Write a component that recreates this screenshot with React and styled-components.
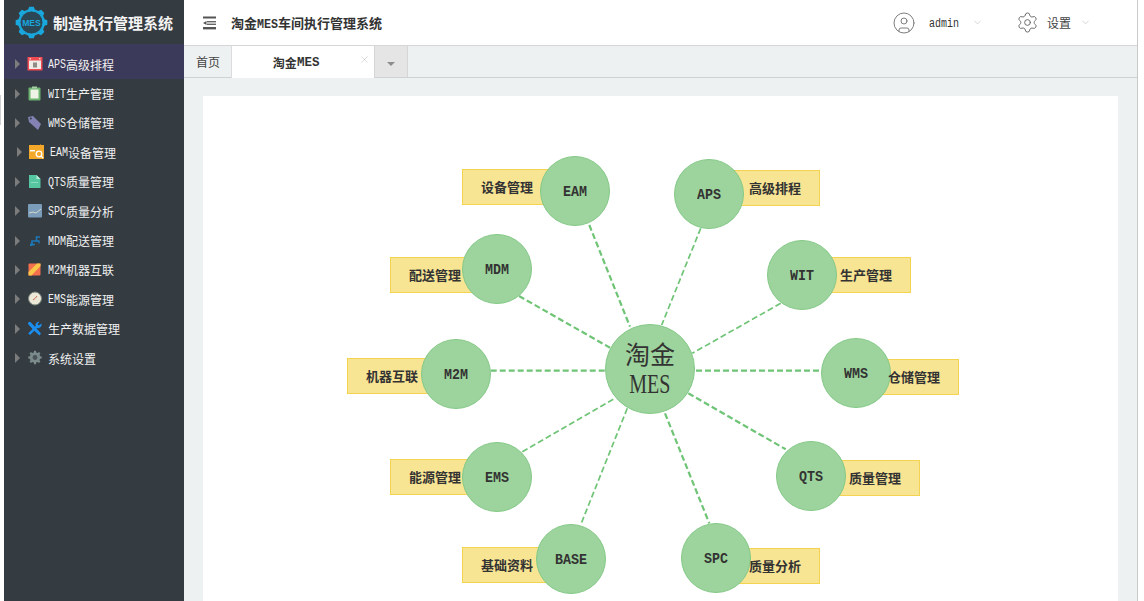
import React from "react";
import styled, { createGlobalStyle } from "styled-components";
import { ChevronDown, CircleUser, Settings, X } from "lucide-react";

const CJK = `"Noto Sans CJK SC", "Noto Sans", sans-serif`;
const MONO = `"Liberation Mono", "Noto Sans CJK SC", monospace`;

const Global = createGlobalStyle`
  html, body { margin: 0; padding: 0; background: #fff; }
  * { box-sizing: border-box; }
  body { font-family: ${CJK}; font-size: 12px; color: #333; }
`;

const Page = styled.div`
  display: flex; width: 1144px; height: 601px; overflow: hidden; background: #fff;
`;
const Gutter = styled.div`
  width: 4px; flex: none; padding-top: 95px;
  &::before { content: ""; display: block; width: 1px; height: 30px; background: #d0d0d0; }
`;
const Sidebar = styled.aside`
  width: 180px; flex: none; background: #343b41; color: #fff;
`;
const Brand = styled.div`
  height: 44px; display: flex; align-items: center; padding-left: 10px; gap: 4px;
  font-size: 15px; font-weight: 700; color: #f4f4f4; background: #343b41;
`;
const Menu = styled.nav`display: flex; flex-direction: column;`;
/* SimSun's Latin is half the width of its Chinese: a mono face narrowed to the same advance */
const Latin = styled.span`
  display: inline-block; font-family: ${MONO};
  font-size: ${p => p.$size}px; font-weight: ${p => (p.$bold ? 700 : 400)};
  line-height: 1; transform-origin: left center;
  transform: scaleX(${p => p.$adv / (p.$size * 0.6)});
  margin-right: ${p => -(p.$size * 0.6 - p.$adv) * p.$n}px;
  margin-top: ${p => p.$drop || 0}px;
`;
const Row = styled.div`
  display: flex; align-items: center; height: ${p => (p.$active ? "35.4px" : "29.4px")};
  padding-top: ${p => (p.$active ? "6px" : "0")};
  padding-bottom: 1px;
  padding-left: ${p => (p.$shift ? "13px" : "11px")};
  background: ${p => (p.$active ? "#3c3a5b" : "transparent")};
  color: #f0f0f0; font-size: 12px; white-space: nowrap;
`;
const Arrow = styled.span`
  width: 0; height: 0; flex: none; margin-right: 7px;
  border-left: 5px solid #7c7c7c; border-top: 5px solid transparent; border-bottom: 5px solid transparent;
`;
const IconBox = styled.span`
  width: 16px; height: 16px; flex: none; margin-right: 5px; display: flex;
  svg { display: block; }
`;

const Main = styled.main`
  width: 954px; flex: none; display: flex; flex-direction: column;
  border-right: 1px solid #c9c9c9; height: 601px;
`;
const Header = styled.header`
  height: 46px; flex: none; display: flex; align-items: center; background: #fff;
  border-bottom: 1px solid #d6d6d6; padding-left: 19px;
`;
const HeadTitle = styled.div`
  margin-left: 14px; font-size: 13px; font-weight: 700; color: #333; width: 661px; white-space: nowrap;
`;
const UserArea = styled.div`display: flex; align-items: center; color: #444;`;
const UserName = styled.span`
  display: flex; margin-left: 13px; color: #333;
`;
const Caret = styled.span`
  display: flex; color: #b4b4b4; margin-left: ${p => p.$gap}px; margin-right: ${p => p.$after || 0}px;
`;
const SetText = styled.span`font-size: 12px; margin-left: 8px; color: #444;`;

const Tabs = styled.div`
  height: 32px; flex: none; display: flex; background: #eef1f2; border-bottom: 1px solid #cfd2d4;
`;
const HomeTab = styled.div`
  width: 47px; display: flex; align-items: center; padding-left: 12px; color: #444; font-size: 12px;
`;
const ActiveTab = styled.div`
  width: 144px; margin-bottom: -1px; background: #fff; position: relative;
  border-left: 1px solid #dcdcdc; border-right: 1px solid #d6d6d6;
  display: flex; align-items: center; justify-content: center; padding-right: 14px;
  font-weight: 700; font-size: 12px; color: #333;
`;
const TabClose = styled.span`
  position: absolute; right: 4px; top: 8px; display: flex; color: #b5b5b5;
`;
const DropTab = styled.div`
  width: 33px; background: #e5e5e5; border-right: 1px solid #d6d6d6;
  display: flex; align-items: center; justify-content: center; padding-top: 4px;
  &::before { content: ""; border-top: 4px solid #8d8d8d; border-left: 4px solid transparent; border-right: 4px solid transparent; }
`;
const Content = styled.div`
  flex: 1; background: #eef1f2; padding: 18px 19px 0; min-height: 0;
`;
const Card = styled.section`
  background: #fff; height: 600px; position: relative; overflow: hidden;
`;
const Lines = styled.svg`position: absolute; left: 0; top: 0;`;
const Node = styled.div`
  position: absolute; z-index: 1; width: 70px; height: 70px; border-radius: 50%;
  background: #9dd39c; border: 1px solid #84c987;
  display: flex; align-items: center; justify-content: center; color: #333;
`;
const Label = styled.div`
  position: absolute; width: 98px; height: 36px; background: #f8e594; border: 1px solid #f3d34f;
  display: flex; align-items: center; justify-content: ${p => (p.$right ? "flex-end" : "flex-start")};
  padding: 0 18px;
`;
const LabelText = styled.span`
  position: relative; z-index: 2; font-size: 13px; font-weight: 700; color: #333;
  white-space: nowrap; margin-top: -2px;
`;
const Hub = styled.div`
  position: absolute; z-index: 1; left: 402px; top: 228px; width: 90px; height: 90px; border-radius: 50%;
  background: #9dd39c; border: 1px solid #84c987; color: #333;
  display: flex; flex-direction: column; align-items: center; justify-content: center;
`;
const HubTop = styled.span`font-size: 25px; line-height: 32px; margin-top: -3px;`;
const HubBottom = styled.span`
  font-family: "Liberation Serif", serif; font-size: 27px; line-height: 30px;
  transform: scaleX(0.74);
`;

function gear(cx, cy, n, ro, ri) {
  let d = "";
  for (let i = 0; i < n; i++) {
    const a = (i / n) * Math.PI * 2 - Math.PI / 2;
    const s = (Math.PI * 2) / n;
    const pts = [
      [ri, a - s * 0.32], [ro, a - s * 0.18], [ro, a + s * 0.18], [ri, a + s * 0.32],
    ];
    pts.forEach(([r, t], k) => {
      d += `${i === 0 && k === 0 ? "M" : "L"}${(cx + r * Math.cos(t)).toFixed(2)} ${(cy + r * Math.sin(t)).toFixed(2)}`;
    });
  }
  return d + "Z";
}

const Logo = () => (
  <svg width="35" height="35" viewBox="0 0 35 35">
    <path d={gear(17.5, 17.5, 8, 16, 13.5)} fill="#19a8de" />
    <circle cx="17.5" cy="17.5" r="11.5" fill="#2b4655" stroke="#19a8de" strokeWidth="1" />
    <text x="17.5" y="20.5" textAnchor="middle" fontFamily="Liberation Sans" fontWeight="700" fontSize="8.5" fill="#19a8de">MES</text>
  </svg>
);

const icons = {
  aps: (
    <svg width="16" height="16" viewBox="0 0 16 16">
      <rect x="0.5" y="1" width="15" height="13.5" fill="#ef4b50" />
      <rect x="2" y="4.5" width="12" height="8.5" fill="#efeae6" />
      <rect x="6" y="6.5" width="4" height="5" fill="#8f8a84" />
      <rect x="2.5" y="2" width="1.5" height="1.5" fill="#f6c9c9" />
      <rect x="12" y="2" width="1.5" height="1.5" fill="#f6c9c9" />
    </svg>
  ),
  wit: (
    <svg width="16" height="16" viewBox="0 0 16 16">
      <rect x="1.5" y="1.5" width="12" height="13" rx="1" fill="#6cb36f" />
      <rect x="3.5" y="3.5" width="8" height="9" fill="#eef3e6" />
      <rect x="5" y="0.5" width="5" height="2" fill="#a7cfa6" />
    </svg>
  ),
  wms: (
    <svg width="16" height="16" viewBox="0 0 16 16">
      <path d="M1 2 L6 1 L14 9 L11 15 L2 7Z" fill="#8482b4" />
      <circle cx="3.8" cy="3.6" r="1" fill="#343b41" />
    </svg>
  ),
  eam: (
    <svg width="16" height="16" viewBox="0 0 16 16">
      <path d="M0 1H11L12 0V1H15V15H0Z" fill="#f4a829" />
      <rect x="1" y="6" width="5" height="1.4" fill="#fff" />
      <circle cx="10" cy="10" r="2.8" fill="#f4a829" stroke="#fff" strokeWidth="1.3" />
      <path d="M12 12l2 2" stroke="#fff" strokeWidth="1.3" />
    </svg>
  ),
  qts: (
    <svg width="16" height="16" viewBox="0 0 16 16">
      <path d="M2 1H9.5L13.5 5V14H2Z" fill="#55c6a0" />
      <path d="M9.5 1L13.5 5H9.5Z" fill="#b6ecd7" />
      <rect x="4" y="8" width="7" height="1" fill="#8cdcbf" />
    </svg>
  ),
  spc: (
    <svg width="16" height="16" viewBox="0 0 16 16">
      <rect x="1" y="1" width="14" height="13.5" rx="1" fill="#7c9db9" />
      <path d="M2 10L6 9L9 10L14 6" fill="none" stroke="#d6d8c8" strokeWidth="1" />
    </svg>
  ),
  mdm: (
    <svg width="16" height="16" viewBox="0 0 16 16">
      <path d="M13 4H9.5V8H5V11.5H8" fill="none" stroke="#1d78b8" strokeWidth="1.6" />
      <path d="M9.5 8h2.5v2.5" fill="none" stroke="#1d78b8" strokeWidth="1.3" />
      <rect x="3" y="10.5" width="2.5" height="2.5" fill="#1d78b8" />
    </svg>
  ),
  m2m: (
    <svg width="16" height="16" viewBox="0 0 16 16">
      <rect x="1.5" y="1.5" width="12" height="12" rx="1" fill="#f36f4e" />
      <path d="M1.5 10L10 1.5H13.5V4L4.5 13.5H1.5Z" fill="#f9c64a" />
    </svg>
  ),
  ems: (
    <svg width="16" height="16" viewBox="0 0 16 16">
      <circle cx="8" cy="7.5" r="6.5" fill="#ece8d8" stroke="#7d867f" strokeWidth="1" />
      <path d="M8 7.5L10 5M8 7.5L6 9" stroke="#c86a52" strokeWidth="1" />
    </svg>
  ),
  data: (
    <svg width="16" height="16" viewBox="0 0 16 16">
      <path d="M1.5 1L3.5 1L9 7L14 12.5L12.5 14.5L6.5 9L1 3Z" fill="#1b8ff0" />
      <path d="M14.5 2.5A3.6 3.6 0 0 1 10 7L3.5 13.5A1.4 1.4 0 0 1 1.5 12L8.5 5.2A3.6 3.6 0 0 1 12.5 0.8L10.6 3L11.7 4.4Z" fill="#1b8ff0" />
    </svg>
  ),
  sys: (
    <svg width="16" height="16" viewBox="0 0 16 16">
      <path d={gear(8, 7.5, 8, 6.8, 5.2)} fill="#7b8b8b" />
      <circle cx="8" cy="7.5" r="2.4" fill="#4b5458" />
    </svg>
  ),
};

const menu = [
  { key: "aps", lat: "APS", text: "高级排程", active: true },
  { key: "wit", lat: "WIT", text: "生产管理" },
  { key: "wms", lat: "WMS", text: "仓储管理" },
  { key: "eam", lat: "EAM", text: "设备管理", shift: true },
  { key: "qts", lat: "QTS", text: "质量管理" },
  { key: "spc", lat: "SPC", text: "质量分析" },
  { key: "mdm", lat: "MDM", text: "配送管理" },
  { key: "m2m", lat: "M2M", text: "机器互联" },
  { key: "ems", lat: "EMS", text: "能源管理" },
  { key: "data", lat: "", text: "生产数据管理" },
  { key: "sys", lat: "", text: "系统设置" },
];

const ORIGIN = { x: 203, y: 96 };
const nodes = [
  { id: "EAM", x: 575, y: 191, lx: 462, ly: 169, text: "设备管理" },
  { id: "APS", x: 709, y: 194, lx: 722, ly: 170, text: "高级排程", right: true },
  { id: "WIT", x: 802, y: 275, lx: 813, ly: 257, text: "生产管理", right: true },
  { id: "WMS", x: 856, y: 373, lx: 861, ly: 359, text: "仓储管理", right: true },
  { id: "QTS", x: 811, y: 476, lx: 822, ly: 460, text: "质量管理", right: true },
  { id: "SPC", x: 716, y: 558, lx: 722, ly: 548, text: "质量分析", right: true },
  { id: "BASE", x: 571, y: 559, lx: 462, ly: 547, text: "基础资料" },
  { id: "EMS", x: 497, y: 477, lx: 390, ly: 459, text: "能源管理" },
  { id: "M2M", x: 456, y: 374, lx: 347, ly: 358, text: "机器互联" },
  { id: "MDM", x: 497, y: 269, lx: 390, ly: 257, text: "配送管理" },
];
/* measured spokes: they stop just short of the circles */
const spokes = [
  [519, 296, 610, 347.7, 2.2],
  [589.3, 225, 630, 326.7, 2.2],
  [700.7, 228.3, 661.7, 325, 1.7],
  [780.7, 303.3, 692.3, 353.3, 1.7],
  [696, 370.7, 821, 370.7, 2.2],
  [688.3, 393.3, 785.7, 449.3, 2.2],
  [665, 413.3, 709.3, 523.3, 2.2],
  [627.3, 408.3, 581, 524, 1.7],
  [613.3, 399.3, 522.3, 451.7, 1.7],
  [490.7, 370.7, 605, 370.7, 2.2],
];

export default function App() {
  return (
    <Page>
      <Global />
      <Gutter />
      <Sidebar>
        <Brand><Logo />制造执行管理系统</Brand>
        <Menu>
          {menu.map(m => (
            <Row key={m.key} $active={m.active} $shift={m.shift}>
              <Arrow />
              <IconBox>{icons[m.key]}</IconBox>
              {m.lat && <Latin $size={12} $adv={6} $n={3} $drop={2}>{m.lat}</Latin>}
              {m.text}
            </Row>
          ))}
        </Menu>
      </Sidebar>
      <Main>
        <Header>
          <svg width="14" height="14" viewBox="0 0 14 14">
            <rect x="0" y="0.5" width="13" height="2" fill="#555" />
            <rect x="4" y="5" width="9" height="1.4" fill="#666" />
            <rect x="4" y="7.6" width="9" height="1.4" fill="#666" />
            <path d="M0 7L3.5 5V9Z" fill="#555" />
            <rect x="0" y="11" width="13" height="2.4" fill="#555" />
          </svg>
          <HeadTitle>淘金<Latin $size={13} $adv={7} $n={3} $bold>MES</Latin>车间执行管理系统</HeadTitle>
          <UserArea>
            <CircleUser size={24} strokeWidth={1} color="#7e7e7e" />
            <UserName><Latin $size={12} $adv={6} $n={5} $drop={2}>admin</Latin></UserName>
            <Caret $gap={13} $after={33}><ChevronDown size={11} strokeWidth={1.2} /></Caret>
            <Settings size={23} strokeWidth={1} color="#666" />
            <SetText>设置</SetText>
            <Caret $gap={9}><ChevronDown size={11} strokeWidth={1.2} /></Caret>
          </UserArea>
        </Header>
        <Tabs>
          <HomeTab>首页</HomeTab>
          <ActiveTab>
            淘金<Latin $size={13} $adv={7.5} $n={3} $bold $drop={1}>MES</Latin>
            <TabClose><X size={11} strokeWidth={1} /></TabClose>
          </ActiveTab>
          <DropTab />
        </Tabs>
        <Content>
          <Card>
            <Lines width="915" height="600" viewBox="0 0 915 600">
              {spokes.map(([x1, y1, x2, y2, w]) => (
                <line
                  key={`${x1}-${y1}`}
                  x1={x1 - ORIGIN.x}
                  y1={y1 - ORIGIN.y}
                  x2={x2 - ORIGIN.x}
                  y2={y2 - ORIGIN.y}
                  stroke="#6fc476"
                  strokeWidth={w}
                  strokeDasharray="6 3"
                />
              ))}
            </Lines>
            {nodes.map(n => (
              <React.Fragment key={n.id}>
                <Label $right={n.right} style={{ left: n.lx - ORIGIN.x, top: n.ly - ORIGIN.y }}>
                  <LabelText>{n.text}</LabelText>
                </Label>
                <Node style={{ left: n.x - 35 - ORIGIN.x, top: n.y - 35 - ORIGIN.y }}>
                  <Latin $size={15} $adv={8} $n={n.id.length} $drop={2} $bold>{n.id}</Latin>
                </Node>
              </React.Fragment>
            ))}
            <Hub>
              <HubTop>淘金</HubTop>
              <HubBottom>MES</HubBottom>
            </Hub>
          </Card>
        </Content>
      </Main>
    </Page>
  );
}
